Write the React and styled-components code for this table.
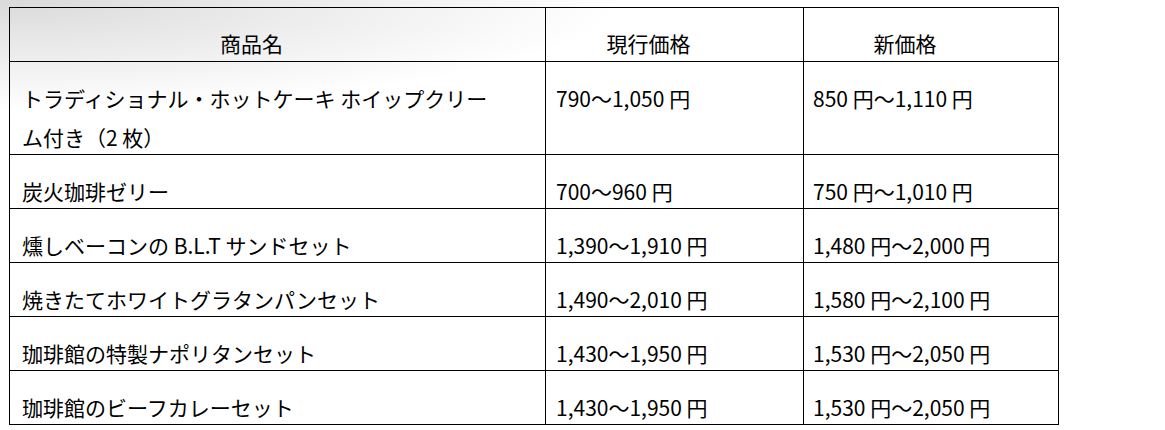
import React from "react";
import styled, { createGlobalStyle } from "styled-components";

const Global = createGlobalStyle`
  html, body { margin: 0; padding: 0; background: #fff; }
  body {
    font-family: "Noto Sans CJK JP", "Noto Sans", sans-serif;
    color: #000;
  }
`;

const Page = styled.div`
  width: 1165px;
  height: 430px;
  box-sizing: border-box;
  padding: 7px 0 0 9px;
  overflow: hidden;
  background:
    radial-gradient(ellipse 620px 110px at 0 0, #dadada 0%, rgba(255,255,255,0) 100%),
    #fff;
`;

const Table = styled.table`
  border-collapse: collapse;
  table-layout: fixed;
  width: 1049px;
  font-size: 21px;
`;

const Col = styled.col`
  width: ${(p) => p.$w}px;
`;

const HeadCell = styled.th`
  border: 1px solid #000;
  font-weight: 400;
  text-align: center;
  vertical-align: top;
  padding: 16px 64px 0 12px;
`;

const Cell = styled.td`
  border: 1px solid #000;
  text-align: left;
  vertical-align: top;
  padding: 17px ${(p) => p.$pr}px 0 ${(p) => p.$pl}px;
`;

const Text = styled.div`
  line-height: 39px;
  margin-bottom: -3px;
`;

const HeadText = styled(Text)`
  margin-bottom: -2px;
`;

const rows = [
  ["トラディショナル・ホットケーキ ホイップクリーム付き（2 枚）", "790～1,050 円", "850 円～1,110 円"],
  ["炭火珈琲ゼリー", "700～960 円", "750 円～1,010 円"],
  ["燻しベーコンの B.L.T サンドセット", "1,390～1,910 円", "1,480 円～2,000 円"],
  ["焼きたてホワイトグラタンパンセット", "1,490～2,010 円", "1,580 円～2,100 円"],
  ["珈琲館の特製ナポリタンセット", "1,430～1,950 円", "1,530 円～2,050 円"],
  ["珈琲館のビーフカレーセット", "1,430～1,950 円", "1,530 円～2,050 円"],
];

export default function App() {
  return (
    <>
      <Global />
      <Page>
        <Table>
          <colgroup>
            <Col $w={536} />
            <Col $w={258} />
            <Col $w={255} />
          </colgroup>
          <thead>
            <tr>
              <HeadCell><HeadText>商品名</HeadText></HeadCell>
              <HeadCell><HeadText>現行価格</HeadText></HeadCell>
              <HeadCell><HeadText>新価格</HeadText></HeadCell>
            </tr>
          </thead>
          <tbody>
            {rows.map((r, i) => (
              <tr key={i}>
                <Cell $pl={12} $pr={50}><Text>{r[0]}</Text></Cell>
                <Cell $pl={10} $pr={20}><Text>{r[1]}</Text></Cell>
                <Cell $pl={9} $pr={20}><Text>{r[2]}</Text></Cell>
              </tr>
            ))}
          </tbody>
        </Table>
      </Page>
    </>
  );
}
